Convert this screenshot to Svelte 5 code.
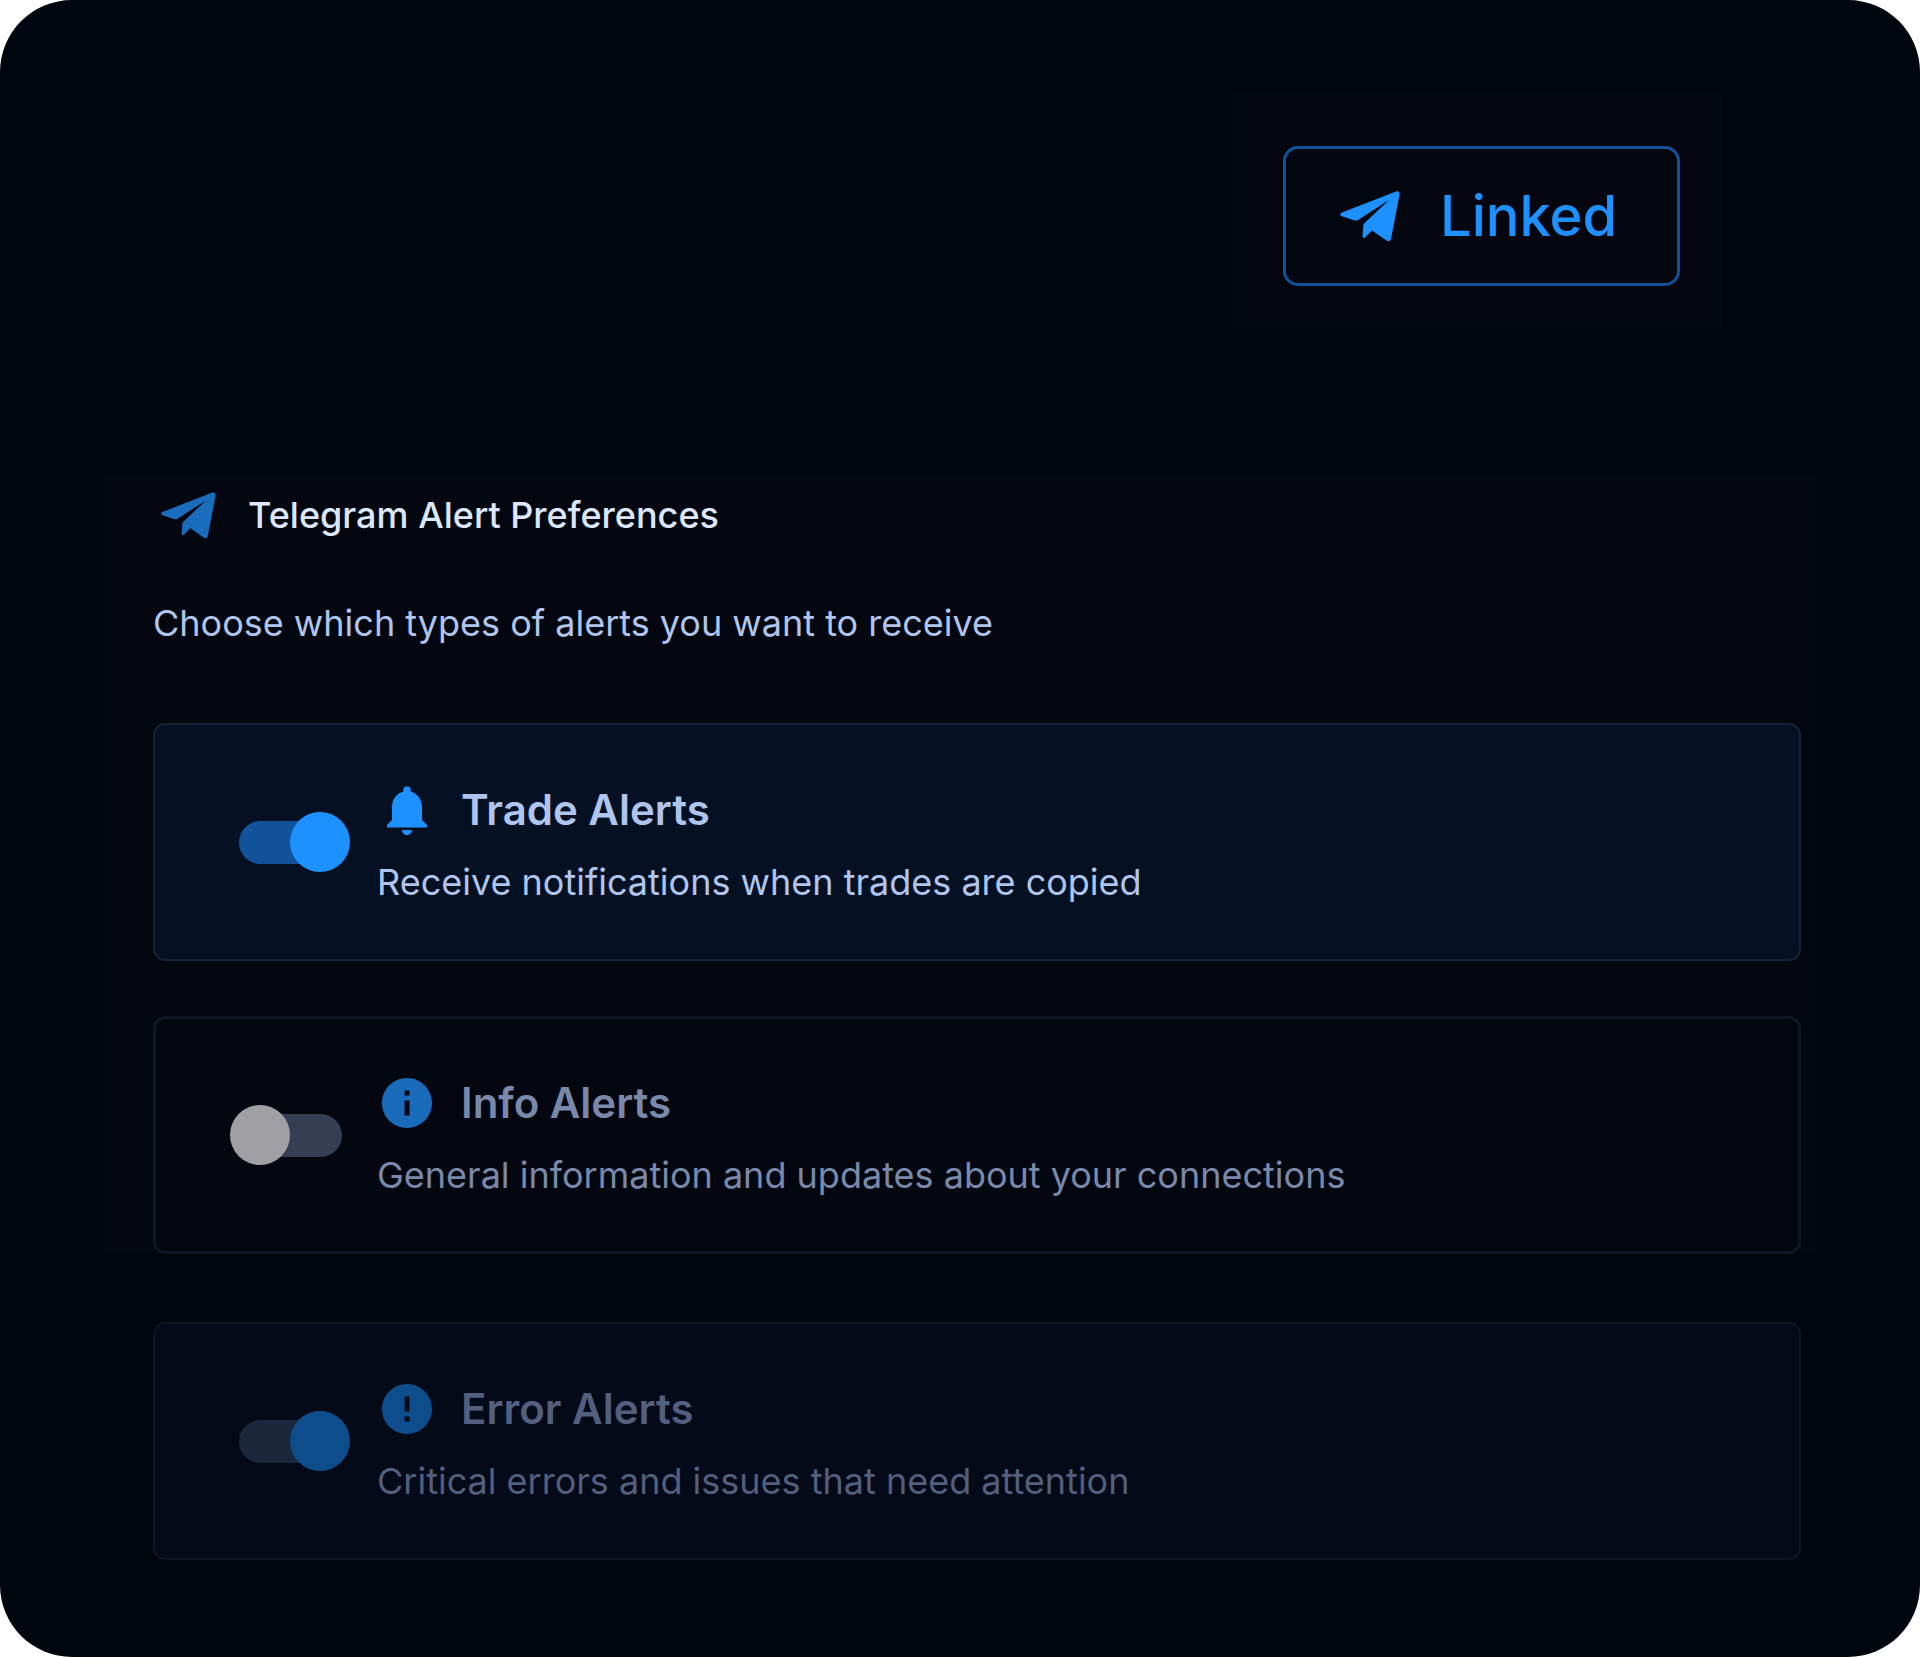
<script lang="ts">
  type Alert = {
    id: string;
    title: string;
    description: string;
    icon: string;
    enabled: boolean;
  };

  const planePath =
    'M1 25 Q-1 23 2 21.5 L56 0.5 Q60 -0.5 59.5 4 L51 48 Q50 51.5 46.5 49.5 L32 39.5 L25 46.5 Q22.5 48 22.5 45 L23.5 33 L49 9 L18 29 Q16 30 14 29.2 Z';

  const disc = 'M12 2C6.48 2 2 6.48 2 12s4.48 10 10 10 10-4.48 10-10S17.52 2 12 2z';

  let alerts = $state<Alert[]>([
    {
      id: 'trade',
      title: 'Trade Alerts',
      description: 'Receive notifications when trades are copied',
      icon: 'M12 22c1.1 0 2-.9 2-2h-4c0 1.1.89 2 2 2zm6-6v-5c0-3.07-1.64-5.64-4.5-6.32V4c0-.83-.67-1.5-1.5-1.5s-1.5.67-1.5 1.5v.68C7.63 5.36 6 7.92 6 11v5l-2 2v1h16v-1l-2-2z',
      enabled: true
    },
    {
      id: 'info',
      title: 'Info Alerts',
      description: 'General information and updates about your connections',
      icon: disc + 'm1 15h-2v-6h2v6zm0-8h-2V7h2v2z',
      enabled: false
    },
    {
      id: 'error',
      title: 'Error Alerts',
      description: 'Critical errors and issues that need attention',
      icon: disc + 'm1 15h-2v-2h2v2zm0-4h-2V7h2v6z',
      enabled: true
    }
  ]);
</script>

{#snippet alertCard(alert: Alert)}
  <label class="card {alert.id}">
    <span class="switch">
      <input type="checkbox" role="switch" bind:checked={alert.enabled} />
    </span>
    <span class="card-text">
      <span class="card-title">
        <svg viewBox="0 0 24 24" aria-hidden="true"><path d={alert.icon} /></svg>
        {alert.title}
      </span>
      <span class="card-description">{alert.description}</span>
    </span>
  </label>
{/snippet}

<main class="page">
  <div class="status">
    <button type="button" class="linked">
      <svg viewBox="0 0 60 51" aria-hidden="true"><path d={planePath} /></svg>
      Linked
    </button>
  </div>

  <section class="preferences">
    <h1>
      <svg viewBox="0 0 60 51" aria-hidden="true"><path d={planePath} /></svg>
      Telegram Alert Preferences
    </h1>
    <p>Choose which types of alerts you want to receive</p>
    {@render alertCard(alerts[0])}
    {@render alertCard(alerts[1])}
  </section>

  <section class="more">
    {@render alertCard(alerts[2])}
  </section>
</main>

<style>
  :global(body) {
    margin: 0;
    background: #fff;
  }

  .page {
    box-sizing: border-box;
    min-height: 100vh;
    padding: 93px 105px 96px;
    border-radius: 72px;
    background: #01050d;
    color: #afc5ee;
    font-family: Inter, 'Open Sans', sans-serif;
    display: flex;
    flex-direction: column;
  }

  .page svg {
    flex: none;
    fill: currentColor;
  }

  .status {
    align-self: flex-end;
    margin-right: 93px;
    padding: 53px 42px 41px 50px;
    background: #04070f;
  }

  .linked {
    box-sizing: border-box;
    width: 397px;
    height: 140px;
    padding: 0 6px 0 0;
    border: 3px solid #12529a;
    border-radius: 15px;
    background: transparent;
    color: #1c91ff;
    font: 500 56px/64px Inter, 'Open Sans', sans-serif;
    display: flex;
    align-items: center;
    justify-content: center;
    gap: 40px;
    cursor: pointer;
  }

  .linked svg {
    width: 60px;
    height: 51px;
  }

  .preferences {
    margin-top: 147px;
    padding: 11px 14px 0 48px;
    background: #04070f;
    display: flex;
    flex-direction: column;
  }

  h1 {
    margin: 0;
    color: #dce7ff;
    font-size: 36px;
    font-weight: 500;
    line-height: 60px;
    display: flex;
    align-items: center;
    gap: 32px;
  }

  h1 svg {
    width: 55px;
    height: 47px;
    margin-left: 8px;
    color: #1a6dbd;
  }

  p {
    margin: 50px 0 72px;
    font-size: 36px;
    line-height: 56px;
  }

  .card {
    box-sizing: border-box;
    min-height: 238px;
    padding: 0 48px;
    border: 2px solid #172234;
    border-radius: 12px;
    display: flex;
    align-items: center;
    cursor: pointer;
  }

  .card + .card {
    margin-top: 55px;
  }

  .switch {
    flex: none;
    padding: 36px 35px 36px 36px;
    display: flex;
  }

  .switch input {
    appearance: none;
    position: relative;
    width: 103px;
    height: 43px;
    margin: 0;
    border-radius: 22px;
    background: #353e52;
    cursor: pointer;
  }

  .switch input::before {
    content: '';
    position: absolute;
    top: -9px;
    left: -9px;
    width: 60px;
    height: 60px;
    border-radius: 50%;
    background: #a09fa4;
  }

  .switch input:checked {
    background: #11529a;
  }

  .switch input:checked::before {
    left: 51px;
    background: #1c91ff;
  }

  .card-text {
    padding-top: 4px;
    display: flex;
    flex-direction: column;
    gap: 16px;
  }

  .card-title {
    font-size: 42px;
    font-weight: 600;
    line-height: 60px;
    display: flex;
    align-items: center;
    gap: 24px;
  }

  .card-title svg {
    width: 60px;
    height: 60px;
    color: #1c91ff;
  }

  .card-description {
    font-size: 36px;
    line-height: 52px;
  }

  .trade {
    background: #051122;
  }

  .info {
    padding: 0 47px;
    border-width: 3px;
    border-color: #121624;
    color: #7989ac;
  }

  .info svg {
    color: #1a6bba;
  }

  .more {
    margin-top: 68px;
    padding: 0 14px 0 48px;
  }

  .error {
    border-color: #0e1524;
    background: #040a18;
    color: #525f7e;
  }

  .error svg {
    color: #0e4d8b;
  }

  .error .switch input:checked {
    background: #1b273c;
  }

  .error .switch input:checked::before {
    background: #0e4d8b;
  }
</style>
